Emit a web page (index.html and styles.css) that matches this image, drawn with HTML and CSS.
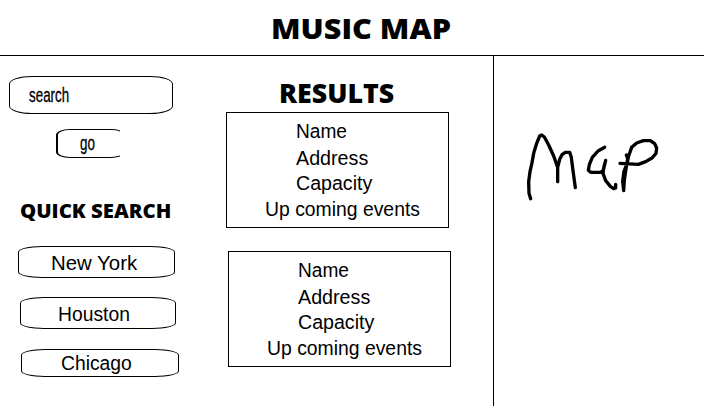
FILE: index.html
```html
<!DOCTYPE html>
<html lang="en">
<head>
<meta charset="utf-8">
<title>Music Map</title>
<link rel="stylesheet" href="styles.css">
</head>
<body>
<header class="top"><h1 class="title">MUSIC MAP</h1></header>
<main class="columns">
  <aside class="side">
    <div class="search"><span class="squeeze">search</span></div>
    <div class="go-clip"><div class="go"><span class="squeeze">go</span></div></div>
    <h2 class="quick-title">QUICK SEARCH</h2>
    <div class="city ny"><span>New York</span></div>
    <div class="city houston"><span>Houston</span></div>
    <div class="city chicago"><span>Chicago</span></div>
  </aside>
  <section class="results">
    <h2 class="results-title">RESULTS</h2>
    <div class="card">
      <p class="name">Name</p><p class="address">Address</p><p class="capacity">Capacity</p><p class="events">Up coming events</p>
    </div>
    <div class="card second">
      <p class="name">Name</p><p class="address">Address</p><p class="capacity">Capacity</p><p class="events">Up coming events</p>
    </div>
  </section>
  <section class="map">
    <svg class="sketch" width="170" height="90" viewBox="0 0 510 270" role="img" aria-label="Map">
      <path d="M62 236L57 220L56 185L60 155L66 128L71 100L80 70L89 48L95 45L103 51L116 75L131 108L143 142V185V142L149 118L156 104L166 97H179L184 112L189 152L194 188L196 203"/>
      <path d="M284 82L264 93L247 112L238 134L235 151L242 157H273L280 150L287 121L282 139L279 160L287 182L301 199L311 206L317 204V193"/>
      <path d="M349 105L353 116L348 146L343 181L341 212L338 184L342 154L351 132L356 108L365 82L380 69L400 62L421 62L434 71L440 84L438 100L426 114L407 125L385 133L330 130"/>
    </svg>
  </section>
</main>
</body>
</html>
```

FILE: styles.css
```css
* { box-sizing: border-box; }
body {
  margin: 0;
  width: 704px;
  height: 406px;
  overflow: hidden;
  background: #fff;
  color: #000;
  font: 20px/26px "Liberation Sans", Arial, sans-serif;
}
h1, h2, p { margin: 0; white-space: nowrap; }
h1, h2 {
  font-family: "Open Sans", sans-serif;
  font-weight: 800;
  width: max-content;
  transform-origin: 0 50%;
}
.top { height: 56px; border-bottom: 1px solid #000; padding: 8px 0 0 271px; }
.title { font-size: 29px; line-height: 40px; transform: scaleX(1.055); }
.columns { display: grid; grid-template-columns: 220px 273px 211px; height: 350px; }
.side { padding-top: 20px; }
.search {
  width: 164px;
  height: 38px;
  margin-left: 9px;
  padding: 5px 0 0 19px;
  border: 1px solid #000;
  border-radius: 23px / 8px;
}
.squeeze { display: inline-block; transform: scaleX(.67); transform-origin: 0 50%; -webkit-text-stroke: .3px #000; }
.go-clip { width: 64px; height: 29px; margin: 15px 0 0 56px; overflow: hidden; }
.go {
  width: 69px;
  height: 29px;
  padding: 0 0 0 22px;
  border: 1px solid #000;
  border-left-width: 2px;
  border-radius: 14px / 6px;
}
.quick-title { font-size: 19px; line-height: 26px; margin: 40px 0 0 20px; transform: scaleX(1.07); }
.city {
  display: flex;
  align-items: center;
  border: 1px solid #000;
  border-radius: 24px / 6px;
}
.city span { transform: scaleX(.965); transform-origin: 0 50%; }
.ny { width: 157px; height: 32px; margin: 22px 0 0 18px; padding-left: 32px; padding-top: 2px; }
.city.ny span { transform: scaleX(1.02); }
.houston { width: 156px; height: 32px; margin: 19px 0 0 20px; padding-left: 37px; padding-top: 2px; }
.chicago { width: 158px; height: 28px; margin: 20px 0 0 21px; padding-left: 39px; }
.results { padding: 18px 0 0 6px; }
.results-title { font-size: 27px; line-height: 37px; margin: 0 0 1px 53px; transform: scaleX(.99); }
.card { width: 223px; height: 116px; border: 1px solid #000; padding: 5px 0 0 69px; }
.card p { width: max-content; transform-origin: 0 50%; }
.second { margin: 23px 0 0 2px; }
.name { transform: scaleX(.955); }
.address { margin-top: 1px; transform: scaleX(.985); }
.card .capacity { margin-top: -1px; transform: scaleX(.98); }
.events { margin-left: -31px; transform: scaleX(.968); }
.map { border-left: 1px solid #000; padding: 64px 0 0 16px; }
.sketch { display: block; fill: none; stroke: #000; stroke-width: 10; stroke-linecap: round; stroke-linejoin: round; }
```
